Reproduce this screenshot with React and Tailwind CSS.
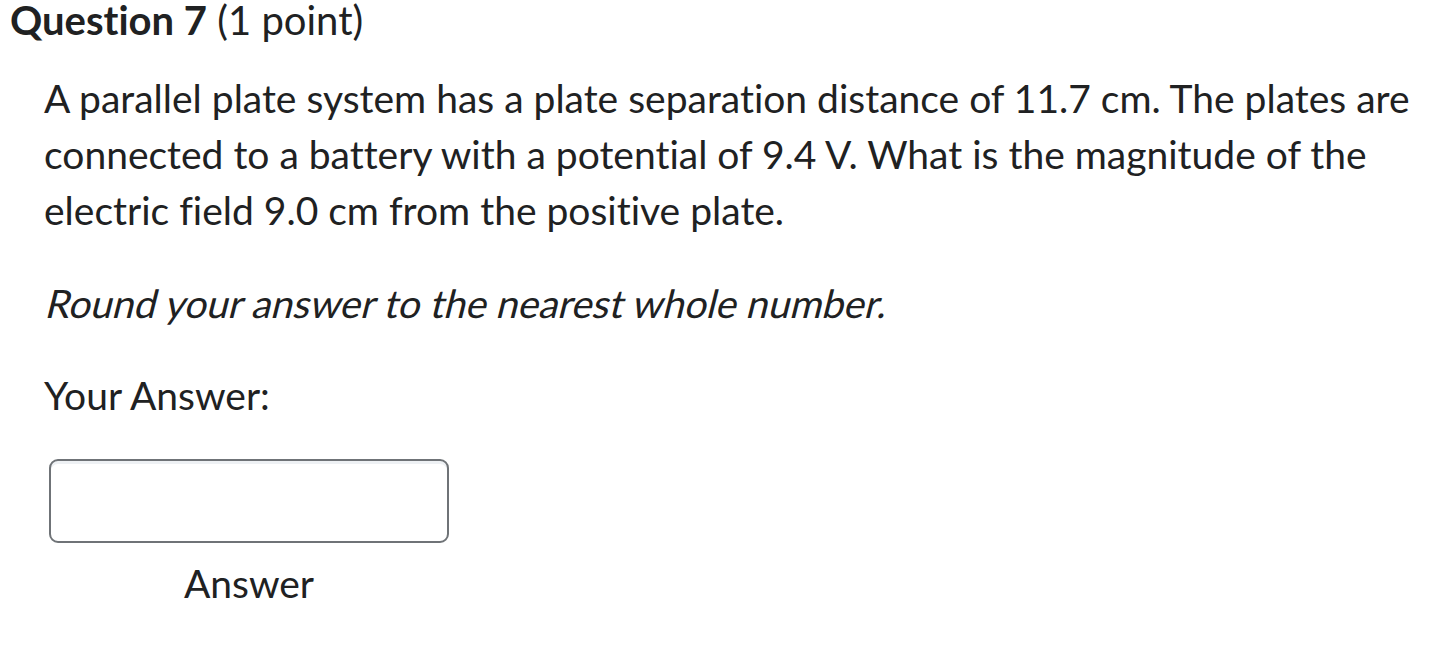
export default function App() {
  return (
    <div className="min-h-screen bg-white text-[#202122] font-['Lato',sans-serif] [font-variant-ligatures:none]">
      <h2 className="pl-[10px] text-[40px] leading-[40px]">
        <span className="font-bold">Question 7</span> (1 point)
      </h2>
      <div className="pl-[44px] pt-[30px]">
        <p className="text-[39px] leading-[56px]">
          A parallel plate system has a plate separation distance of 11.7 cm. The plates are connected to a battery with a
          potential of 9.4 V. What is the magnitude of the electric field 9.0 cm from the positive plate.
        </p>
        <p className="mt-[37px] text-[39px] leading-[56px]">
          <em className="inline-block origin-[0_43px] -skew-x-[14deg] not-italic">
            Round your answer to the nearest whole number.
          </em>
        </p>
        <p className="mt-[36px] text-[39px] leading-[56px]">Your Answer:</p>
        <div className="mt-[36px] ml-[5px] flex w-[400px] flex-col items-center">
          <input
            type="text"
            aria-label="Answer"
            className="h-[84px] w-full rounded-[9px] border-2 border-[#6f7377] bg-white shadow-[inset_0_3px_0_#eef1f4] outline-none"
          />
          <label className="mt-[12px] text-[39px] leading-[56px]">Answer</label>
        </div>
      </div>
    </div>
  );
}
